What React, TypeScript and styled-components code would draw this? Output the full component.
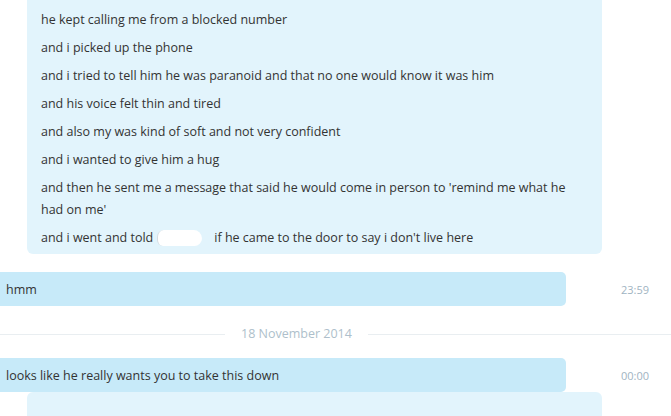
import React from "react";
import styled, { createGlobalStyle } from "styled-components";

const Global = createGlobalStyle`
  html, body { margin: 0; padding: 0; background: #ffffff; }
  body { font-family: "Open Sans", "Noto Sans", sans-serif; color: #333333; overflow: hidden; }
`;

const Page = styled.div`
  width: 671px;
  height: 416px;
  overflow: hidden;
  display: flex;
  flex-direction: column;
`;

const QuoteBubble = styled.div<{ $top?: boolean }>`
  margin: ${(p) => (p.$top ? "-12px" : "0")} 69px 0 27px;
  padding: ${(p) => (p.$top ? "21px" : "8px")} 14px 5px 14px;
  background: #e2f4fc;
  border-radius: 6px;
  display: flex;
  flex-direction: column;
  gap: 6px;
`;

const Line = styled.p`
  margin: 0;
  font-size: 12.5px;
  line-height: 22px;
`;

const Redacted = styled.span`
  display: inline-block;
  width: 44px;
  height: 16px;
  margin: 0 12px 0 4px;
  vertical-align: -4px;
  background: #ffffff;
  border-radius: 8px 10px 9px 7px;
  border-left: 1px solid #d6dde2;
`;

const MsgRow = styled.div<{ $mt: number }>`
  margin-top: ${(p) => p.$mt}px;
  display: flex;
  align-items: center;
`;

const MsgBubble = styled.div`
  width: 572px;
  margin-left: -6px;
  box-sizing: border-box;
  height: 34px;
  padding: 0 12px;
  display: flex;
  align-items: center;
  background: #c7eaf9;
  border-radius: 5px;
  font-size: 12.5px;
`;

const Time = styled.div`
  flex: 1;
  text-align: right;
  padding-right: 22px;
  font-size: 11px;
  color: #9fb4c2;
`;

const DateSep = styled.div`
  margin-top: 19px;
  display: grid;
  grid-template-columns: 225px auto 1fr;
  align-items: center;
  column-gap: 16px;
`;

const Rule = styled.div`
  height: 1px;
  background: #e9eef1;
`;

const DateText = styled.div`
  font-size: 12.5px;
  color: #aebfcb;
  line-height: 18px;
`;

const lines = [
  "he kept calling me from a blocked number",
  "and i picked up the phone",
  "and i tried to tell him he was paranoid and that no one would know it was him",
  "and his voice felt thin and tired",
  "and also my was kind of soft and not very confident",
  "and i wanted to give him a hug",
  "and then he sent me a message that said he would come in person to 'remind me what he had on me'",
];

export default function App() {
  return (
    <Page>
      <Global />
      <QuoteBubble $top>
        {lines.map((l) => (
          <Line key={l}>{l}</Line>
        ))}
        <Line>
          and i went and told
          <Redacted />
          if he came to the door to say i don't live here
        </Line>
      </QuoteBubble>
      <MsgRow $mt={18}>
        <MsgBubble>hmm</MsgBubble>
        <Time>23:59</Time>
      </MsgRow>
      <DateSep>
        <Rule />
        <DateText>18 November 2014</DateText>
        <Rule />
      </DateSep>
      <MsgRow $mt={15}>
        <MsgBubble>looks like he really wants you to take this down</MsgBubble>
        <Time>00:00</Time>
      </MsgRow>
      <QuoteBubble>
        <Line>&nbsp;</Line>
      </QuoteBubble>
    </Page>
  );
}
